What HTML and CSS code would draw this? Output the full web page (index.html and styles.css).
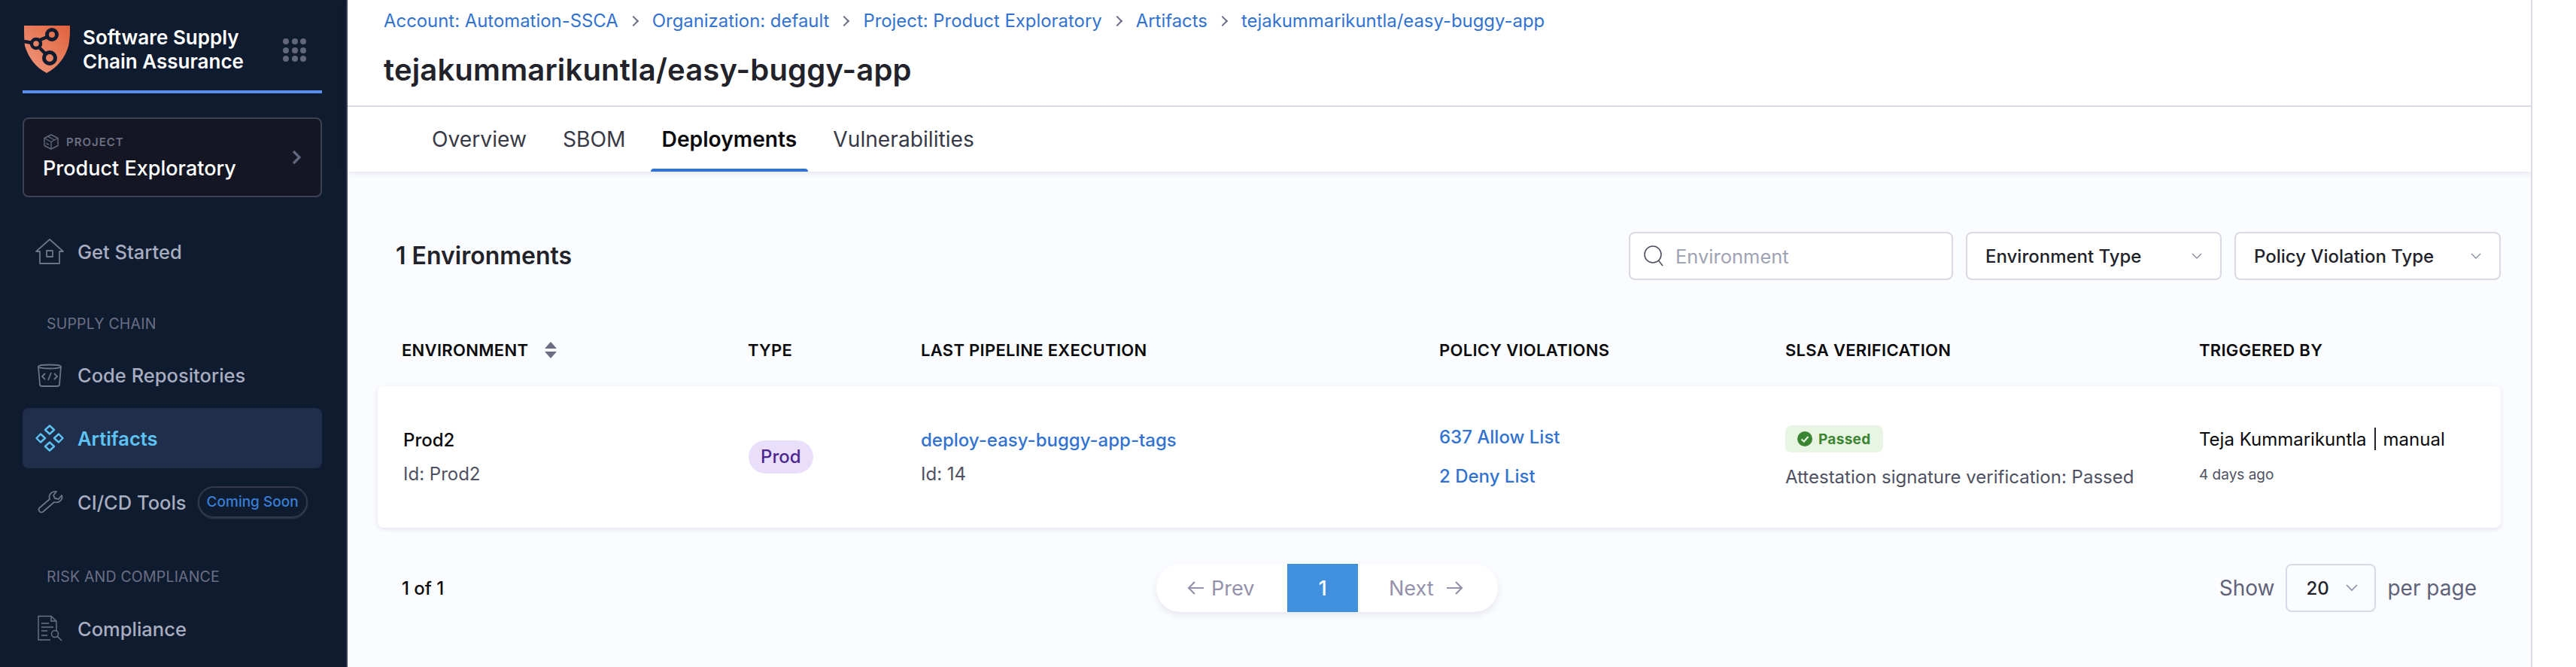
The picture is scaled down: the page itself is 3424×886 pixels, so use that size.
FILE: index.html
```html
<!DOCTYPE html>
<html lang="en">
<head>
<meta charset="utf-8">
<title>Deployments</title>
<link rel="stylesheet" href="styles.css">
</head>
<body>
<div class="app">
  <aside class="sidebar">
    <div class="brand">
      <svg class="logo" viewBox="0 0 62 63" width="62" height="63">
        <defs><linearGradient id="sh" x1="0" y1="1" x2="1" y2="0"><stop offset="0" stop-color="#f09a80"/><stop offset="1" stop-color="#e0623c"/></linearGradient></defs>
        <path d="M1 0H62C62 8 62 18 60 27C56 42 45 56 31 63C17 56 7 43 2 27C1 18 1 8 1 0Z" fill="url(#sh)"/>
        <path d="M1 21L12 23M22 19L32 15M22 30L29 37" stroke="#101b2f" stroke-width="4.500" fill="none"/>
        <circle cx="17" cy="24" r="6" fill="none" stroke="#101b2f" stroke-width="4.500"/>
        <circle cx="38" cy="12" r="6.500" fill="none" stroke="#101b2f" stroke-width="5"/>
        <circle cx="35" cy="43" r="7.500" fill="none" stroke="#101b2f" stroke-width="5"/>
      </svg>
      <div class="brand-text">Software Supply<br>Chain Assurance</div>
      <div class="dots"><i></i><i></i><i></i><i></i><i></i><i></i><i></i><i></i><i></i></div>
    </div>
    <div class="project">
      <div>
        <div class="project-label">
          <svg viewBox="0 0 20 21" width="20" height="21" fill="none" stroke="#62677d" stroke-width="1.400" stroke-linejoin="round"><path d="M10 1L19 5.500V15.500L10 20L1 15.500V5.500Z"/><path d="M1 5.500L10 10.500L19 5.500M10 10.500V20M5.500 3.200L14.500 8M3.500 12.500L7 14.200"/></svg>
          <span>PROJECT</span>
        </div>
        <div class="project-name">Product Exploratory</div>
      </div>
      <svg viewBox="0 0 12 20" width="12" height="20" fill="none" stroke="#62677d" stroke-width="3.200"><path d="M2 2L10 10L2 18"/></svg>
    </div>
    <nav class="nav">
      <a class="nav-item">
        <svg class="nav-icon" viewBox="0 0 38 36" fill="none" stroke="#6e7488" stroke-width="1.800" stroke-linejoin="round"><path d="M1 18L19 2L37 18H32V34H6V18Z"/><rect x="15" y="17" width="8" height="8"/></svg>
        <span>Get Started</span>
      </a>
      <div class="nav-title first">SUPPLY CHAIN</div>
      <a class="nav-item">
        <svg class="nav-icon" viewBox="0 0 38 36" fill="none" stroke="#6e7488" stroke-width="1.800"><ellipse cx="19" cy="7" rx="15" ry="2.500"/><path d="M4 7L6 31Q6 33 9 33H29Q32 33 32 31L34 7"/><path d="M13 16L9 20L13 24M25 16L29 20L25 24M21 15L17 25"/></svg>
        <span>Code Repositories</span>
      </a>
      <a class="nav-item active">
        <svg class="nav-icon" viewBox="0 0 38 36" fill="none" stroke="#5ec2f2" stroke-width="2.400" stroke-linejoin="round"><path d="M19 1.500L25 7L19 12.500L13 7Z"/><path d="M7 12.500L13 18L7 23.500L1.500 18Z"/><path d="M31 12.500L36.500 18L31 23.500L25 18Z"/><path d="M19 23.500L25 29L19 34.500L13 29Z"/></svg>
        <span>Artifacts</span>
      </a>
      <a class="nav-item">
        <svg class="nav-icon" viewBox="0 0 38 36" fill="none" stroke="#6e7488" stroke-width="1.800" stroke-linejoin="round"><path d="M5 26L19 14C17 8 22 3 28 4L24 9L26 13L31 14L35 9C37 14 32 20 25 18L10 31C7 33 3 29 5 26Z"/></svg>
        <span>CI/CD Tools</span>
        <span class="soon">Coming Soon</span>
      </a>
      <div class="nav-title risk">RISK AND COMPLIANCE</div>
      <a class="nav-item">
        <svg class="nav-icon" viewBox="0 0 38 36" fill="none" stroke="#6e7488" stroke-width="1.400"><path d="M28 22V8L21 1.500H4V33H20"/><path d="M21 1.500V8H28M8 11H18M8 16H24M8 21H16M8 27H16"/><circle cx="26" cy="25" r="4.500"/><path d="M29 28L35 34"/></svg>
        <span>Compliance</span>
      </a>
    </nav>
  </aside>

  <main class="main">
    <header class="page-header">
      <div class="head-top">
        <div class="crumbs">
          <a>Account: Automation-SSCA</a><span class="sep"></span>
          <a>Organization: default</a><span class="sep"></span>
          <a>Project: Product Exploratory</a><span class="sep"></span>
          <a>Artifacts</a><span class="sep"></span>
          <a>tejakummarikuntla/easy-buggy-app</a>
        </div>
        <h1>tejakummarikuntla/easy-buggy-app</h1>
      </div>
      <div class="tabs">
        <a class="tab">Overview</a>
        <a class="tab">SBOM</a>
        <a class="tab current">Deployments</a>
        <a class="tab">Vulnerabilities</a>
      </div>
    </header>

    <section class="content">
      <div class="toolbar">
        <h2>1 Environments</h2>
        <div class="filters">
          <div class="field search">
            <svg viewBox="0 0 28 30" width="28" height="30" fill="none" stroke="#4f5162" stroke-width="1.600"><circle cx="13" cy="13" r="11"/><path d="M20.500 21L26 28"/></svg>
            <span>Environment</span>
          </div>
          <div class="field select env"><span>Environment Type</span><svg viewBox="0 0 14 8" width="14" height="8" fill="none" stroke="#8a8ea3" stroke-width="1.300"><path d="M1 1L7 7L13 1"/></svg></div>
          <div class="field select pol"><span>Policy Violation Type</span><svg viewBox="0 0 14 8" width="14" height="8" fill="none" stroke="#8a8ea3" stroke-width="1.300"><path d="M1 1L7 7L13 1"/></svg></div>
        </div>
      </div>

      <div class="grid heads">
        <div class="env-head">ENVIRONMENT
          <svg viewBox="0 0 16 22" width="16" height="22" fill="#6b6d85"><path d="M8 0L16 9H0Z"/><path d="M8 22L16 13H0Z"/></svg>
        </div>
        <div>TYPE</div>
        <div>LAST PIPELINE EXECUTION</div>
        <div>POLICY VIOLATIONS</div>
        <div>SLSA VERIFICATION</div>
        <div>TRIGGERED BY</div>
      </div>

      <div class="grid row">
        <div class="cell-env">
          <div class="strong">Prod2</div>
          <div class="muted">Id: Prod2</div>
        </div>
        <div><span class="pill">Prod</span></div>
        <div class="cell-pipe">
          <a class="link">deploy-easy-buggy-app-tags</a>
          <div class="muted">Id: 14</div>
        </div>
        <div class="cell-pol">
          <a class="link">637 Allow List</a>
          <a class="link">2 Deny List</a>
        </div>
        <div class="cell-slsa">
          <span class="passed">
            <svg viewBox="0 0 20 20" width="20" height="20"><circle cx="10" cy="10" r="10" fill="#3a8531"/><path d="M5.500 10.500L8.800 13.500L14.500 7" fill="none" stroke="#e8f5e2" stroke-width="2.200"/></svg>
            Passed
          </span>
          <div class="muted">Attestation signature verification: Passed</div>
        </div>
        <div class="cell-by">
          <div class="by-line"><span>Teja Kummarikuntla</span><i class="bar"></i><span>manual</span></div>
          <div class="ago">4 days ago</div>
        </div>
      </div>

      <div class="pager">
        <div class="count">1 of 1</div>
        <div class="pages">
          <span class="pg-btn prev"><svg viewBox="0 0 22 18" width="22" height="18" fill="none" stroke="#9492ab" stroke-width="2.200"><path d="M10 1L2 9L10 17M2 9H22"/></svg>Prev</span>
          <span class="pg-num">1</span>
          <span class="pg-btn next">Next<svg viewBox="0 0 22 18" width="22" height="18" fill="none" stroke="#9492ab" stroke-width="2.200"><path d="M12 1L20 9L12 17M20 9H0"/></svg></span>
        </div>
        <div class="per">
          <span>Show</span>
          <div class="per-select"><b>20</b><svg viewBox="0 0 16 10" width="16" height="10" fill="none" stroke="#8a8ea3" stroke-width="1.600"><path d="M1 1L8 8L15 1"/></svg></div>
          <span>per page</span>
        </div>
      </div>
    </section>
  </main>
  <div class="rail"></div>
</div>
</body>
</html>
```

FILE: styles.css
```css
* { box-sizing: border-box; }
html, body { margin: 0; padding: 0; height: 886px; overflow: hidden; background: #fff; }
body { font-family: Inter, "Liberation Sans", sans-serif; color: #1c1c28; }
a { color: inherit; text-decoration: none; }
h1, h2 { margin: 0; }

.app { display: flex; height: 886px; width: 3424px; }

/* Sidebar */
.sidebar { width: 462px; flex: none; background: #0f1b2f; border-right: 2px solid #3a4053; padding: 0 32px 0 30px; overflow: hidden; }
.brand { height: 124px; border-bottom: 4px solid #5b8def; display: flex; align-items: flex-start; padding: 34px 21px 0 1px; }
.logo { flex: none; }
.brand-text { margin-left: 17px; font-size: 26px; line-height: 32px; font-weight: 600; color: #fff; white-space: nowrap; }
.dots { display: grid; grid-template-columns: repeat(3, 8px); gap: 3.500px; margin: 17px 0 0 auto; }
.dots i { width: 8px; height: 8px; border-radius: 50%; background: #62677d; }
.project { margin-top: 32px; height: 106px; border: 2px solid #3d4151; border-radius: 8px; background: #141723; padding: 0 26px 0 25px; display: flex; justify-content: space-between; align-items: center; }
.project-label { display: flex; align-items: center; gap: 10px; font-size: 15px; font-weight: 600; letter-spacing: 1px; color: #6b6f85; height: 22px; margin-left: 1px; }
.project-name { margin-top: 7px; font-size: 27px; line-height: 34px; font-weight: 500; color: #fff; }
.nav { margin-top: 32px; }
.nav-item { display: flex; align-items: center; height: 80px; padding-left: 17px; font-size: 25.500px; font-weight: 500; color: #a8adc0; border-radius: 8px; white-space: nowrap; }
.nav-icon { width: 38px; height: 36px; flex: none; margin-right: 18px; }
.nav-item.active { background: #1f2e4a; color: #5ec2f2; font-weight: 600; margin: 4px 0 5px; }
.nav-title { font-size: 19.500px; color: #6b6f85; padding-left: 32px; line-height: 24px; letter-spacing: 0.2px; }
.nav-title.first { padding-top: 44px; height: 84px; }
.nav-title.risk { padding-top: 47px; height: 88px; }
.soon { margin-left: 15px; height: 42px; line-height: 37px; padding: 0 10px; border: 2px solid #333a4d; border-radius: 21px; font-size: 19px; font-weight: 500; color: #3a7fd6; box-shadow: 0 1px 2px #3a4053; }

/* Main */
.main { width: 2902px; flex: none; display: flex; flex-direction: column; background: #fbfcff; }
.page-header { height: 228px; background: #fff; box-shadow: 0 2px 8px rgba(60, 60, 90, 0.12); }
.head-top { height: 142px; border-bottom: 2px solid #d9dae5; padding: 13px 0 0 48px; }
.crumbs { display: flex; align-items: center; font-size: 23.900px; line-height: 30px; color: #3272d0; white-space: nowrap; }
.sep { width: 10px; height: 10px; border-top: 2px solid #6b6d85; border-right: 2px solid #6b6d85; transform: rotate(45deg); margin: 0 20px 0 15px; }
h1 { margin-top: 26px; font-size: 40px; line-height: 48px; font-weight: 600; color: #22222a; letter-spacing: 0.15px; white-space: nowrap; }
.tabs { display: flex; height: 86px; padding-left: 97px; gap: 18px; }
.tab { height: 86px; padding: 0 15px; display: flex; align-items: center; font-size: 28.200px; color: #383946; white-space: nowrap; }
.tab.current { font-weight: 600; color: #0b0b0d; position: relative; }
.tab.current::after { content: ""; position: absolute; left: 0; right: 0; bottom: 0; height: 4px; background: #3272d0; border-radius: 4px 4px 0 0; }

.content { flex: 1; padding: 0 40px; }
.toolbar { display: flex; align-items: center; justify-content: space-between; margin-top: 80px; height: 64px; padding-left: 24px; }
h2 { font-size: 32px; font-weight: 600; color: #22222a; white-space: nowrap; margin-bottom: 2px; }
.filters { display: flex; gap: 17px; }
.field { height: 64px; background: #fff; border: 2px solid #d9dae5; border-radius: 8px; display: flex; align-items: center; font-size: 24px; }
.search { width: 431px; padding-left: 17px; gap: 15px; font-size: 25.500px; color: #9fa3b3; }
.select { justify-content: space-between; padding: 0 24px; color: #22222a; font-weight: 500; }
.env { width: 340px; }
.pol { width: 354px; }

.grid { display: grid; grid-template-columns: 460px 230px 689px 460px 550px 1fr; padding-left: 32px; }
.heads { margin-top: 73px; height: 68px; align-items: start; font-size: 22px; font-weight: 600; line-height: 40px; color: #0b0b0d; letter-spacing: 0.3px; white-space: nowrap; }
.env-head { display: flex; align-items: center; gap: 22px; height: 40px; }
.row { height: 188px; background: #fff; border-radius: 8px; box-shadow: 0 2px 6px rgba(60, 60, 90, 0.12); align-items: center; font-size: 24px; }
.cell-env { padding-left: 2px; }
.strong { font-weight: 500; color: #0b0b0d; line-height: 30px; }
.muted { color: #4f5162; line-height: 30px; margin-top: 15px; white-space: nowrap; }
.link { color: #3272d0; font-weight: 500; white-space: nowrap; display: block; line-height: 30px; }
.cell-pol { display: flex; flex-direction: column; gap: 22px; }
.pill { display: inline-block; height: 44px; line-height: 44px; padding: 0 16px; margin-left: 1px; border-radius: 22px; background: #e9dffb; color: #4d278f; font-size: 24px; font-weight: 500; }
.cell-slsa .muted { margin-top: 18px; }
.passed { display: inline-flex; align-items: center; gap: 8px; height: 36px; padding: 0 17px 0 16px; background: #e9f5e3; border-radius: 8px; color: #3a8531; font-size: 19px; font-weight: 700; letter-spacing: 0.3px; }
.by-line { display: flex; align-items: center; gap: 10px; color: #0b0b0d; font-weight: 400; height: 30px; white-space: nowrap; }
.bar { width: 2px; height: 30px; background: #22222a; }
.ago { margin-top: 18px; font-size: 19px; color: #4f5162; line-height: 30px; }

.pager { display: grid; grid-template-columns: 1004px 453px 1fr; align-items: center; margin-top: 48px; height: 64px; padding-left: 32px; }
.count { font-size: 24px; font-weight: 500; color: #0b0b0d; }
.pages { height: 64px; margin-left: -1px; display: flex; background: #fff; border-radius: 32px; box-shadow: 0 4px 10px rgba(60, 60, 90, 0.1); font-size: 27px; color: #9492ab; overflow: hidden; }
.pg-btn { display: flex; align-items: center; flex: none; }
.prev { width: 174px; padding-left: 41px; gap: 10px; }
.next { width: 185px; padding-left: 41px; gap: 17px; }
.pg-num { width: 94px; flex: none; background: #4190de; color: #fff; display: flex; align-items: center; justify-content: center; font-size: 27px; font-weight: 500; }
.per { display: flex; align-items: center; justify-content: flex-end; gap: 15px; font-size: 28px; color: #5f6278; padding-right: 32px; }
.per-select { width: 120px; height: 64px; border: 2px solid #d9dae5; border-radius: 8px; display: flex; align-items: center; gap: 22px; padding-left: 25px; font-size: 24px; }
.per-select b { font-weight: 500; color: #22222a; }

.rail { width: 60px; flex: none; border-left: 2px solid #d9dae5; background: #fff; }
```
